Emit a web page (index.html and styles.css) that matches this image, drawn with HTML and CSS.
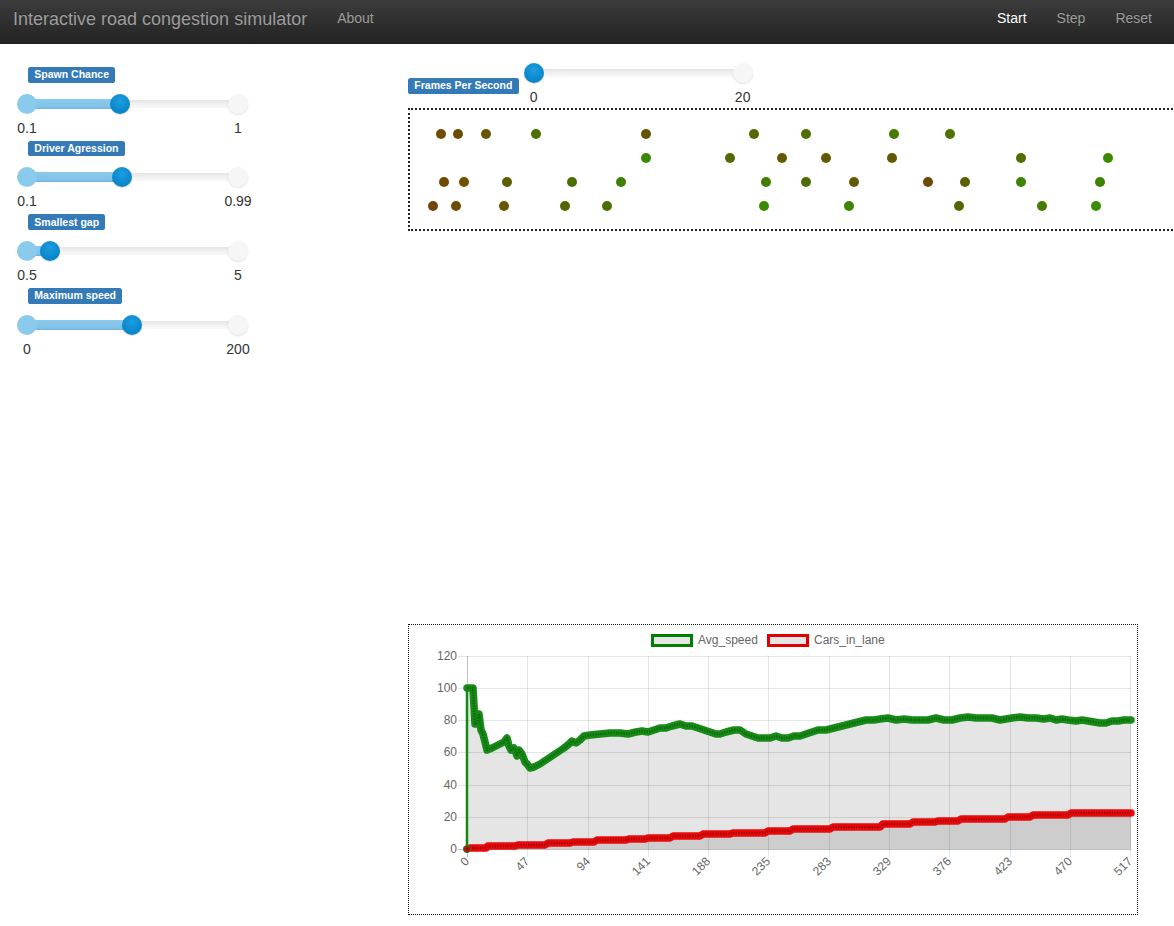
FILE: index.html
```html
<!DOCTYPE html>
<html>
<head>
<meta charset="utf-8">
<title>Interactive road congestion simulator</title>
<link rel="stylesheet" href="styles.css">
</head>
<body>
<nav class="navbar">
  <span class="brand">Interactive road congestion simulator</span>
  <a class="nav-link" href="#">About</a>
  <div class="nav-right">
    <a class="nav-link active" href="#">Start</a>
    <a class="nav-link" href="#">Step</a>
    <a class="nav-link" href="#">Reset</a>
  </div>
</nav>
<main class="main">
  <aside class="controls">
    <div class="ctl">
      <span class="label">Spawn Chance</span>
      <div class="slider">
        <div class="track"></div>
        <div class="fill" style="width:93px"></div>
        <span class="knob start"></span>
        <span class="knob end"></span>
        <span class="knob handle" style="left:93px"></span>
      </div>
      <div class="ticks"><span>0.1</span><span>1</span></div>
    </div>
    <div class="ctl">
      <span class="label">Driver Agression</span>
      <div class="slider">
        <div class="track"></div>
        <div class="fill" style="width:95px"></div>
        <span class="knob start"></span>
        <span class="knob end"></span>
        <span class="knob handle" style="left:95px"></span>
      </div>
      <div class="ticks"><span>0.1</span><span>0.99</span></div>
    </div>
    <div class="ctl">
      <span class="label">Smallest gap</span>
      <div class="slider">
        <div class="track"></div>
        <div class="fill" style="width:23px"></div>
        <span class="knob start"></span>
        <span class="knob end"></span>
        <span class="knob handle" style="left:23px"></span>
      </div>
      <div class="ticks"><span>0.5</span><span>5</span></div>
    </div>
    <div class="ctl">
      <span class="label">Maximum speed</span>
      <div class="slider">
        <div class="track"></div>
        <div class="fill" style="width:105px"></div>
        <span class="knob start"></span>
        <span class="knob end"></span>
        <span class="knob handle" style="left:105px"></span>
      </div>
      <div class="ticks"><span>0</span><span>200</span></div>
    </div>
  </aside>
  <section class="content">
    <div class="fps">
      <span class="label fps-label">Frames Per Second</span>
      <div class="fps-ctl">
        <div class="slider fps-slider">
          <div class="track"></div>
          <span class="knob end"></span>
          <span class="knob handle" style="left:0px"></span>
        </div>
        <div class="ticks fps-ticks"><span>0</span><span>20</span></div>
      </div>
    </div>
    <div class="road">
      <span class="car" style="left:26px;top:19px;background:#6e4b00"></span>
      <span class="car" style="left:43px;top:19px;background:#6c4c00"></span>
      <span class="car" style="left:71px;top:19px;background:#665600"></span>
      <span class="car" style="left:121px;top:19px;background:#4d7000"></span>
      <span class="car" style="left:231px;top:19px;background:#665500"></span>
      <span class="car" style="left:339px;top:19px;background:#566600"></span>
      <span class="car" style="left:391px;top:19px;background:#4f6e00"></span>
      <span class="car" style="left:479px;top:19px;background:#457c00"></span>
      <span class="car" style="left:535px;top:19px;background:#4f7300"></span>

      <span class="car" style="left:231px;top:43px;background:#388a00"></span>
      <span class="car" style="left:315px;top:43px;background:#526800"></span>
      <span class="car" style="left:367px;top:43px;background:#635a00"></span>
      <span class="car" style="left:411px;top:43px;background:#635a00"></span>
      <span class="car" style="left:477px;top:43px;background:#665800"></span>
      <span class="car" style="left:606px;top:43px;background:#527000"></span>
      <span class="car" style="left:693px;top:43px;background:#3a8a00"></span>

      <span class="car" style="left:29px;top:67px;background:#704a00"></span>
      <span class="car" style="left:49px;top:67px;background:#6e5200"></span>
      <span class="car" style="left:92px;top:67px;background:#5e5e00"></span>
      <span class="car" style="left:157px;top:67px;background:#4c7000"></span>
      <span class="car" style="left:206px;top:67px;background:#3f8000"></span>
      <span class="car" style="left:351px;top:67px;background:#437d00"></span>
      <span class="car" style="left:391px;top:67px;background:#4e6c00"></span>
      <span class="car" style="left:439px;top:67px;background:#615a00"></span>
      <span class="car" style="left:513px;top:67px;background:#6e4a00"></span>
      <span class="car" style="left:550px;top:67px;background:#5c6000"></span>
      <span class="car" style="left:606px;top:67px;background:#3d8500"></span>
      <span class="car" style="left:685px;top:67px;background:#3e8400"></span>

      <span class="car" style="left:18px;top:91px;background:#74450a"></span>
      <span class="car" style="left:41px;top:91px;background:#6c4c00"></span>
      <span class="car" style="left:89px;top:91px;background:#665600"></span>
      <span class="car" style="left:150px;top:91px;background:#566400"></span>
      <span class="car" style="left:192px;top:91px;background:#4b6e00"></span>
      <span class="car" style="left:349px;top:91px;background:#3a8a00"></span>
      <span class="car" style="left:434px;top:91px;background:#3f8400"></span>
      <span class="car" style="left:544px;top:91px;background:#526800"></span>
      <span class="car" style="left:627px;top:91px;background:#437e00"></span>
      <span class="car" style="left:681px;top:91px;background:#3a8c00"></span>
    </div>
    <div class="chart">
      <svg class="chart-svg" width="728" height="289" viewBox="409 625 728 289" xmlns="http://www.w3.org/2000/svg">
        <!-- legend -->
        <rect x="652.5" y="635.5" width="39" height="10" fill="#e6e6e6" stroke="#008000" stroke-width="3"/>
        <text x="698" y="644" class="ct">Avg_speed</text>
        <rect x="768.5" y="635.5" width="39" height="10" fill="#e6e6e6" stroke="#e00000" stroke-width="3"/>
        <text x="814" y="644" class="ct">Cars_in_lane</text>

        <!-- grid -->
        <g stroke="rgba(0,0,0,0.1)" stroke-width="1">
          <line x1="458" y1="656.5" x2="1131" y2="656.5"/>
          <line x1="458" y1="688.5" x2="1131" y2="688.5"/>
          <line x1="458" y1="720.5" x2="1131" y2="720.5"/>
          <line x1="458" y1="752.5" x2="1131" y2="752.5"/>
          <line x1="458" y1="785.5" x2="1131" y2="785.5"/>
          <line x1="458" y1="817.5" x2="1131" y2="817.5"/>
          <line x1="527.5" y1="656" x2="527.5" y2="857"/>
          <line x1="588.5" y1="656" x2="588.5" y2="857"/>
          <line x1="648.5" y1="656" x2="648.5" y2="857"/>
          <line x1="708.5" y1="656" x2="708.5" y2="857"/>
          <line x1="768.5" y1="656" x2="768.5" y2="857"/>
          <line x1="829.5" y1="656" x2="829.5" y2="857"/>
          <line x1="889.5" y1="656" x2="889.5" y2="857"/>
          <line x1="949.5" y1="656" x2="949.5" y2="857"/>
          <line x1="1010.5" y1="656" x2="1010.5" y2="857"/>
          <line x1="1070.5" y1="656" x2="1070.5" y2="857"/>
          <line x1="1130.5" y1="656" x2="1130.5" y2="857"/>
        </g>
        <g stroke="rgba(0,0,0,0.25)" stroke-width="1">
          <line x1="458" y1="849.5" x2="1131" y2="849.5"/>
          <line x1="467.5" y1="656" x2="467.5" y2="857"/>
        </g>

        <!-- y labels -->
        <g class="ct" text-anchor="end">
          <text x="457" y="660">120</text>
          <text x="457" y="692">100</text>
          <text x="457" y="724">80</text>
          <text x="457" y="756">60</text>
          <text x="457" y="789">40</text>
          <text x="457" y="821">20</text>
          <text x="457" y="853">0</text>
        </g>
        <!-- x labels -->
        <g class="ct" text-anchor="end">
          <text x="470" y="862" transform="rotate(-45 470 862)">0</text>
          <text x="530" y="862" transform="rotate(-45 530 862)">47</text>
          <text x="591" y="862" transform="rotate(-45 591 862)">94</text>
          <text x="651" y="862" transform="rotate(-45 651 862)">141</text>
          <text x="711" y="862" transform="rotate(-45 711 862)">188</text>
          <text x="771" y="862" transform="rotate(-45 771 862)">235</text>
          <text x="832" y="862" transform="rotate(-45 832 862)">283</text>
          <text x="892" y="862" transform="rotate(-45 892 862)">329</text>
          <text x="952" y="862" transform="rotate(-45 952 862)">376</text>
          <text x="1013" y="862" transform="rotate(-45 1013 862)">423</text>
          <text x="1073" y="862" transform="rotate(-45 1073 862)">470</text>
          <text x="1133" y="862" transform="rotate(-45 1133 862)">517</text>
        </g>

        <!-- fills -->
        <polygon fill="rgba(0,0,0,0.1)" points="467,849 467,688 473,688 475,724 477,724 479,714 481,730 483,734 485,742 487,750 492,748 498,745 504,742 507,738 509,746 511,750 514,748 517,756 519,750 522,754 525,762 527,764 530,768 534,767 540,764 546,760 552,756 558,752 564,748 569,744 572,741 576,743 580,740 584,736 590,735 600,734 610,733 620,733 628,734 636,732 642,731 648,732 654,730 660,728 666,728 672,726 680,724 686,726 692,726 698,728 704,730 710,732 716,734 720,734 726,732 734,730 740,730 746,734 752,736 758,738 764,738 770,738 776,736 782,738 788,738 794,736 800,736 806,734 812,732 818,730 826,730 834,728 842,726 850,724 858,722 866,720 874,720 880,719 888,718 896,720 904,719 912,720 920,720 928,720 936,718 944,720 952,720 960,718 968,717 976,718 984,718 992,718 1000,720 1006,719 1012,718 1020,717 1028,718 1036,718 1044,719 1050,718 1056,720 1062,719 1068,720 1076,721 1082,720 1088,721 1094,722 1100,723 1106,723 1112,721 1118,721 1124,720 1131,720 1131,849"/>
        <polygon fill="rgba(0,0,0,0.1)" points="467,849 470,848 486,848 488,846 515,846 518,845 545,845 548,843 570,843 573,842 594,842 597,840 626,840 629,839 645,839 648,838 670,838 673,836 700,836 703,834 730,834 733,833 765,833 768,831 790,831 793,829 830,829 833,827 880,827 883,824 910,824 913,822 935,822 938,821 958,821 961,819 1005,819 1008,817 1030,817 1033,815 1068,815 1071,813 1131,813 1131,849"/>

        <!-- green series -->
        <polyline fill="none" stroke="#138a13" stroke-width="2.5" points="467,849 467,688"/>
        <polyline class="thick g" points="467,688 473,688 475,724 477,724 479,714 481,730 483,734 485,742 487,750 492,748 498,745 504,742 507,738 509,746 511,750 514,748 517,756 519,750 522,754 525,762 527,764 530,768 534,767 540,764 546,760 552,756 558,752 564,748 569,744 572,741 576,743 580,740 584,736 590,735 600,734 610,733 620,733 628,734 636,732 642,731 648,732 654,730 660,728 666,728 672,726 680,724 686,726 692,726 698,728 704,730 710,732 716,734 720,734 726,732 734,730 740,730 746,734 752,736 758,738 764,738 770,738 776,736 782,738 788,738 794,736 800,736 806,734 812,732 818,730 826,730 834,728 842,726 850,724 858,722 866,720 874,720 880,719 888,718 896,720 904,719 912,720 920,720 928,720 936,718 944,720 952,720 960,718 968,717 976,718 984,718 992,718 1000,720 1006,719 1012,718 1020,717 1028,718 1036,718 1044,719 1050,718 1056,720 1062,719 1068,720 1076,721 1082,720 1088,721 1094,722 1100,723 1106,723 1112,721 1118,721 1124,720 1131,720"/>
        <polyline class="inner g" points="467,688 473,688 475,724 477,724 479,714 481,730 483,734 485,742 487,750 492,748 498,745 504,742 507,738 509,746 511,750 514,748 517,756 519,750 522,754 525,762 527,764 530,768 534,767 540,764 546,760 552,756 558,752 564,748 569,744 572,741 576,743 580,740 584,736 590,735 600,734 610,733 620,733 628,734 636,732 642,731 648,732 654,730 660,728 666,728 672,726 680,724 686,726 692,726 698,728 704,730 710,732 716,734 720,734 726,732 734,730 740,730 746,734 752,736 758,738 764,738 770,738 776,736 782,738 788,738 794,736 800,736 806,734 812,732 818,730 826,730 834,728 842,726 850,724 858,722 866,720 874,720 880,719 888,718 896,720 904,719 912,720 920,720 928,720 936,718 944,720 952,720 960,718 968,717 976,718 984,718 992,718 1000,720 1006,719 1012,718 1020,717 1028,718 1036,718 1044,719 1050,718 1056,720 1062,719 1068,720 1076,721 1082,720 1088,721 1094,722 1100,723 1106,723 1112,721 1118,721 1124,720 1131,720"/>

        <!-- red series -->
        <polyline class="thick r" points="467,849 470,848 486,848 488,846 515,846 518,845 545,845 548,843 570,843 573,842 594,842 597,840 626,840 629,839 645,839 648,838 670,838 673,836 700,836 703,834 730,834 733,833 765,833 768,831 790,831 793,829 830,829 833,827 880,827 883,824 910,824 913,822 935,822 938,821 958,821 961,819 1005,819 1008,817 1030,817 1033,815 1068,815 1071,813 1131,813"/>
        <polyline class="inner r" points="467,849 470,848 486,848 488,846 515,846 518,845 545,845 548,843 570,843 573,842 594,842 597,840 626,840 629,839 645,839 648,838 670,838 673,836 700,836 703,834 730,834 733,833 765,833 768,831 790,831 793,829 830,829 833,827 880,827 883,824 910,824 913,822 935,822 938,821 958,821 961,819 1005,819 1008,817 1030,817 1033,815 1068,815 1071,813 1131,813"/>
        <circle cx="467" cy="849" r="3.5" fill="rgba(0,0,0,0.15)" stroke="#138a13" stroke-width="1"/>
      </svg>
    </div>
  </section>
</main>
</body>
</html>
```

FILE: styles.css
```css
html, body {
  margin: 0;
  padding: 0;
}
body {
  font-family: "Liberation Sans", Arial, Helvetica, sans-serif;
  font-size: 14px;
  color: #333;
  background: #fff;
  overflow-x: hidden;
}

/* navbar */
.navbar {
  height: 44px;
  display: flex;
  align-items: flex-start;
  padding: 0 7px 0 13px;
  background: linear-gradient(to bottom, #3c3c3c 0%, #222 100%);
}
.brand {
  font-size: 18px;
  line-height: 20px;
  padding-top: 9px;
  color: #9d9d9d;
  margin-right: 15px;
  text-shadow: 0 -1px 0 rgba(0, 0, 0, 0.25);
}
.nav-link {
  display: block;
  padding: 8px 15px 0;
  line-height: 20px;
  color: #9d9d9d;
  text-decoration: none;
  text-shadow: 0 -1px 0 rgba(0, 0, 0, 0.25);
}
.nav-link.active {
  color: #fff;
}
.nav-right {
  margin-left: auto;
  display: flex;
}

/* layout */
.main {
  display: grid;
  grid-template-columns: 408px 1fr;
}
.controls {
  padding: 23px 0 0 17px;
}
.content {
  padding-top: 19px;
  min-width: 0;
}

/* labels */
.label {
  display: block;
  width: max-content;
  font-size: 10.5px;
  font-weight: bold;
  line-height: 1;
  color: #fff;
  background: #337ab7;
  padding: 2.1px 6.3px 3.15px;
  border-radius: 2.6px;
  white-space: nowrap;
}
.ctl {
  margin-bottom: 5px;
}
.ctl .label {
  margin-left: 11px;
}

/* slider */
.slider {
  position: relative;
  width: 231px;
  height: 20px;
  margin-top: 11px;
}
.track {
  position: absolute;
  left: 10px;
  right: 10px;
  top: 6px;
  height: 8px;
  border-radius: 4px;
  background: linear-gradient(to bottom, #e4e4e4 0%, #f3f3f3 60%, #f8f8f8 100%);
}
.fill {
  position: absolute;
  left: 10px;
  top: 5px;
  height: 10px;
  background: linear-gradient(to bottom, #8dcaec 0%, #80c2e8 80%, #6fb3de 100%);
}
.knob {
  position: absolute;
  top: 0;
  width: 20px;
  height: 20px;
  border-radius: 50%;
}
.knob.start {
  left: 0;
  background: #8acaec;
}
.knob.end {
  right: 0;
  background: #f6f6f6;
  box-shadow: 0 1px 2px rgba(0, 0, 0, 0.12);
}
.knob.handle {
  background: radial-gradient(circle at 50% 35%, #1c9ee0 0%, #0b88cd 60%, #0a7fc2 100%);
  box-shadow: 0 1px 1px rgba(0, 0, 0, 0.15);
}
.ticks {
  display: flex;
  justify-content: space-between;
  width: 231px;
  margin-top: 6px;
  line-height: 16px;
}
.ticks span {
  width: 20px;
  display: flex;
  justify-content: center;
  white-space: nowrap;
}

/* fps */
.fps {
  display: flex;
  align-items: flex-start;
}
.fps-label {
  margin-top: 15px;
}
.fps-ctl {
  margin-left: 5px;
}
.fps-slider {
  width: 229px;
  margin-top: 0;
}
.fps-ticks {
  width: 229px;
  margin-top: 6px;
}

/* road */
.road {
  position: relative;
  width: 800px;
  height: 119px;
  border: 2px dotted #222;
  margin-top: 3px;
}
.car {
  position: absolute;
  width: 10px;
  height: 10px;
  border-radius: 50%;
}

/* chart */
.chart {
  width: 728px;
  height: 289px;
  border: 1px dotted #111;
  margin-top: 393px;
}
.chart-svg {
  display: block;
}
.ct {
  font-family: "Liberation Sans", Arial, Helvetica, sans-serif;
  font-size: 12px;
  fill: #666;
}
.thick {
  fill: none;
  stroke-width: 7.5;
  stroke-linejoin: round;
  stroke-linecap: round;
}
.thick.g {
  stroke: #178a17;
}
.thick.r {
  stroke: #e80a0a;
}
.inner {
  fill: none;
  stroke-width: 2.5;
  stroke-dasharray: 1.3 1.3;
  stroke-linejoin: round;
}
.inner.g {
  stroke: #0a6a0a;
}
.inner.r {
  stroke: #a80000;
}
```
